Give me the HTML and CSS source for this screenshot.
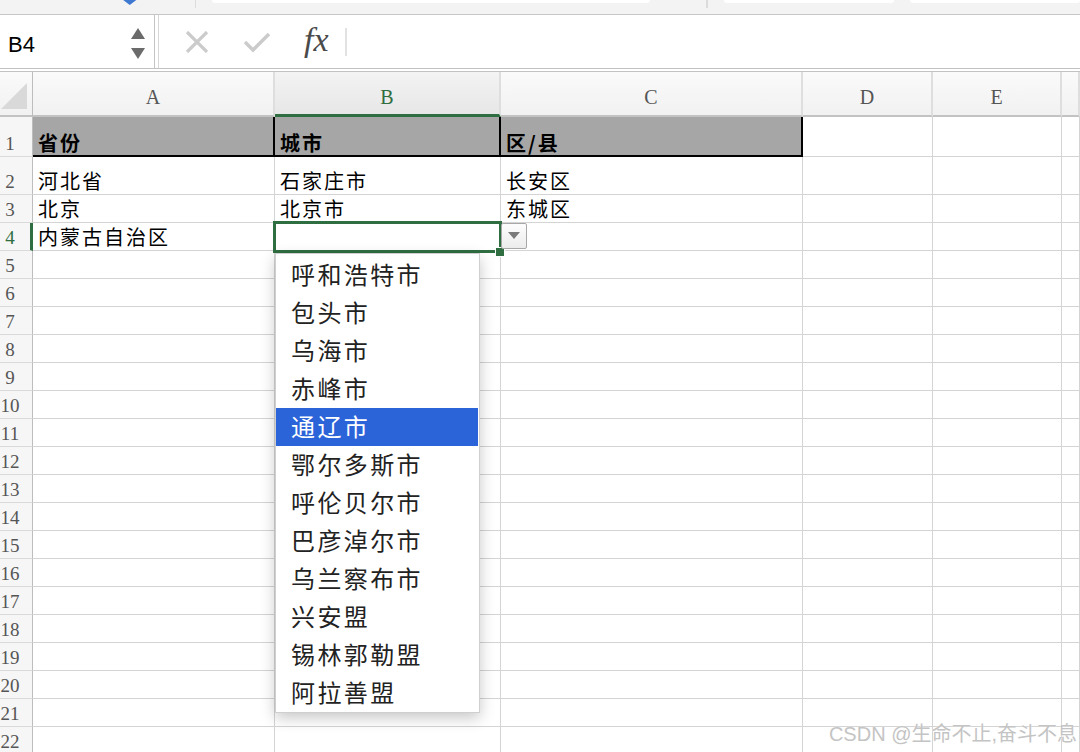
FILE: index.html
```html
<!DOCTYPE html>
<html lang="zh-CN">
<head>
    <meta charset="UTF-8">
    <title>工作簿1</title>
    <link rel="stylesheet" href="styles.css">
</head>
<body>
    <div class="topbar">
        <svg class="topbar-icon" width="18" height="8" viewBox="0 0 18 8"><polygon points="1,0 17,0 9,6" fill="#3f78d0"/></svg>
        <span class="topbar-sep"></span>
        <span class="topbar-box wide"></span>
        <span class="topbar-sep"></span>
        <span class="topbar-box"></span>
        <span class="topbar-box"></span>
    </div>

    <div class="fbar">
        <div class="namebox">
            <span class="cellref">B4</span>
            <svg class="spin" width="16" height="34" viewBox="0 0 16 34">
                <polygon points="8,1 15,12 1,12" fill="#6b6b6b"/>
                <polygon points="1,21 15,21 8,32" fill="#6b6b6b"/>
            </svg>
        </div>
        <div class="fx-area">
            <svg width="24" height="22" viewBox="0 0 24 22"><path d="M2 1 L22 21 M22 1 L2 21" stroke="#cbcbcb" stroke-width="3.2" fill="none"/></svg>
            <svg width="28" height="22" viewBox="0 0 28 22"><path d="M2 11 L10 19 L26 3" stroke="#cbcbcb" stroke-width="3.4" fill="none"/></svg>
            <span class="fx">fx</span>
            <span class="fx-sep"></span>
        </div>
    </div>

    <div class="sheet">
        <div class="row head">
            <div class="corner"><svg width="28" height="28" viewBox="0 0 28 28"><polygon points="1,27 27,27 27,1" fill="#d9d9d9"/></svg></div>
            <div class="ch">A</div>
            <div class="ch sel">B</div>
            <div class="ch">C</div>
            <div class="ch">D</div>
            <div class="ch">E</div>
            <div class="ch"></div>
        </div>
        <div class="row r1">
            <div class="rh">1</div>
            <div class="cell title">省份</div>
            <div class="cell title">城市</div>
            <div class="cell title">区/县</div>
            <div class="cell"></div><div class="cell"></div><div class="cell"></div>
        </div>
        <div class="row r2">
            <div class="rh">2</div>
            <div class="cell">河北省</div>
            <div class="cell">石家庄市</div>
            <div class="cell">长安区</div>
            <div class="cell"></div><div class="cell"></div><div class="cell"></div>
        </div>
        <div class="row">
            <div class="rh">3</div>
            <div class="cell">北京</div>
            <div class="cell">北京市</div>
            <div class="cell">东城区</div>
            <div class="cell"></div><div class="cell"></div><div class="cell"></div>
        </div>
        <div class="row">
            <div class="rh active">4</div>
            <div class="cell">内蒙古自治区</div>
            <div class="cell"></div>
            <div class="cell"></div>
            <div class="cell"></div><div class="cell"></div><div class="cell"></div>
        </div>
        <div class="row"><div class="rh">5</div><div class="cell"></div><div class="cell"></div><div class="cell"></div><div class="cell"></div><div class="cell"></div><div class="cell"></div></div>
        <div class="row"><div class="rh">6</div><div class="cell"></div><div class="cell"></div><div class="cell"></div><div class="cell"></div><div class="cell"></div><div class="cell"></div></div>
        <div class="row"><div class="rh">7</div><div class="cell"></div><div class="cell"></div><div class="cell"></div><div class="cell"></div><div class="cell"></div><div class="cell"></div></div>
        <div class="row"><div class="rh">8</div><div class="cell"></div><div class="cell"></div><div class="cell"></div><div class="cell"></div><div class="cell"></div><div class="cell"></div></div>
        <div class="row"><div class="rh">9</div><div class="cell"></div><div class="cell"></div><div class="cell"></div><div class="cell"></div><div class="cell"></div><div class="cell"></div></div>
        <div class="row"><div class="rh">10</div><div class="cell"></div><div class="cell"></div><div class="cell"></div><div class="cell"></div><div class="cell"></div><div class="cell"></div></div>
        <div class="row"><div class="rh">11</div><div class="cell"></div><div class="cell"></div><div class="cell"></div><div class="cell"></div><div class="cell"></div><div class="cell"></div></div>
        <div class="row"><div class="rh">12</div><div class="cell"></div><div class="cell"></div><div class="cell"></div><div class="cell"></div><div class="cell"></div><div class="cell"></div></div>
        <div class="row"><div class="rh">13</div><div class="cell"></div><div class="cell"></div><div class="cell"></div><div class="cell"></div><div class="cell"></div><div class="cell"></div></div>
        <div class="row"><div class="rh">14</div><div class="cell"></div><div class="cell"></div><div class="cell"></div><div class="cell"></div><div class="cell"></div><div class="cell"></div></div>
        <div class="row"><div class="rh">15</div><div class="cell"></div><div class="cell"></div><div class="cell"></div><div class="cell"></div><div class="cell"></div><div class="cell"></div></div>
        <div class="row"><div class="rh">16</div><div class="cell"></div><div class="cell"></div><div class="cell"></div><div class="cell"></div><div class="cell"></div><div class="cell"></div></div>
        <div class="row"><div class="rh">17</div><div class="cell"></div><div class="cell"></div><div class="cell"></div><div class="cell"></div><div class="cell"></div><div class="cell"></div></div>
        <div class="row"><div class="rh">18</div><div class="cell"></div><div class="cell"></div><div class="cell"></div><div class="cell"></div><div class="cell"></div><div class="cell"></div></div>
        <div class="row"><div class="rh">19</div><div class="cell"></div><div class="cell"></div><div class="cell"></div><div class="cell"></div><div class="cell"></div><div class="cell"></div></div>
        <div class="row"><div class="rh">20</div><div class="cell"></div><div class="cell"></div><div class="cell"></div><div class="cell"></div><div class="cell"></div><div class="cell"></div></div>
        <div class="row"><div class="rh">21</div><div class="cell"></div><div class="cell"></div><div class="cell"></div><div class="cell"></div><div class="cell"></div><div class="cell"></div></div>
        <div class="row"><div class="rh">22</div><div class="cell"></div><div class="cell"></div><div class="cell"></div><div class="cell"></div><div class="cell"></div><div class="cell"></div></div>

        <!-- selected cell B4 with validation list -->
        <div class="selection"></div>
        <div class="fill-handle"></div>
        <div class="dd-btn"><svg width="12" height="8" viewBox="0 0 12 8"><polygon points="0,0 12,0 6,7" fill="#7a7a7a"/></svg></div>
        <ul class="dropdown">
            <li>呼和浩特市</li>
            <li>包头市</li>
            <li>乌海市</li>
            <li>赤峰市</li>
            <li class="hl">通辽市</li>
            <li>鄂尔多斯市</li>
            <li>呼伦贝尔市</li>
            <li>巴彦淖尔市</li>
            <li>乌兰察布市</li>
            <li>兴安盟</li>
            <li>锡林郭勒盟</li>
            <li>阿拉善盟</li>
        </ul>
    </div>

    <div class="watermark">CSDN @生命不止,奋斗不息</div>
</body>
</html>
```

FILE: styles.css
```css
body {
    margin: 0;
    width: 1080px;
    height: 752px;
    overflow: hidden;
    background-color: #fff;
    font-family: "Noto Sans CJK SC", sans-serif;
    color: #000;
    position: relative;
}

/* ribbon remains at the very top */
.topbar {
    height: 14px;
    background-color: #f3f3f3;
    border-bottom: 1px solid #c6c6c6;
    display: flex;
    align-items: flex-start;
    overflow: hidden;
}
.topbar-icon {
    margin-left: 121px;
    margin-top: -1px;
}
.topbar-sep {
    width: 2px;
    height: 8px;
    background-color: #dcdcdc;
    margin-left: 56px;
}
.topbar-box {
    height: 3px;
    width: 175px;
    background-color: #fff;
    margin-left: 16px;
    border-radius: 0 0 3px 3px;
}
.topbar-box.wide {
    width: 450px;
}

/* formula bar */
.fbar {
    height: 53px;
    display: flex;
    border-bottom: 4px double #c2c2c2;
}
.namebox {
    width: 155px;
    border-right: 1px solid #c4c4c4;
    display: flex;
    align-items: center;
    justify-content: space-between;
    padding: 0 8px 0 8px;
    box-sizing: border-box;
}
.cellref {
    font-family: "Liberation Sans", Arial, sans-serif;
    font-size: 22px;
    margin-top: 7px;
}
.spin {
    margin-top: 4px;
}
.fx-area {
    flex: 1;
    margin-left: 3px;
    border-left: 1px solid #d8d8d8;
    display: flex;
    align-items: center;
    padding-left: 26px;
    gap: 34px;
}
.fx {
    font-family: "Liberation Serif", "DejaVu Serif", serif;
    font-style: italic;
    font-size: 34px;
    color: #4a4a4a;
    margin-left: -1px;
    margin-top: -4px;
}
.fx-sep {
    width: 2px;
    height: 28px;
    background-color: #e2e2e2;
    margin-left: -18px;
}

/* sheet grid */
.sheet {
    position: relative;
}
.row {
    display: grid;
    grid-template-columns: 33px 242px 226px 302px 130px 129px 1fr;
    height: 28px;
}
.row > div {
    box-sizing: border-box;
    border-right: 1px solid #d4d4d4;
    border-bottom: 1px solid #d4d4d4;
}
.row.head {
    height: 45px;
    background: linear-gradient(#fafafa, #f1f1f1);
}
.row.head > div {
    border-bottom: 2px solid #c3c3c3;
    border-right: 2px solid #dedede;
}
.row.head > .corner {
    border-right: 1px solid #bdbdbd;
    display: flex;
    align-items: flex-end;
    padding: 0 0 5px 0;
}
.ch {
    font-family: "Liberation Serif", "DejaVu Serif", serif;
    font-size: 20px;
    color: #555;
    display: flex;
    align-items: center;
    justify-content: center;
    padding-top: 8px;
}
.row.head > .ch.sel {
    color: #2f6e40;
    background: linear-gradient(#f3f3f3, #e7e7e7);
    border-bottom: 3px solid #2f6e40;
}
.rh {
    font-family: "Liberation Serif", "DejaVu Serif", serif;
    font-size: 19px;
    color: #555;
    background-color: #f6f6f6;
    display: flex;
    align-items: flex-end;
    justify-content: center;
    padding: 0 12px 1px 0;
}
.row > .rh {
    border-right: 1px solid #bdbdbd;
    border-bottom: 1px solid #dadada;
}
.row > .rh.active {
    color: #2f6e40;
    border-right: 3px solid #2f6e40;
    padding-right: 10px;
}
.cell {
    font-size: 20px;
    letter-spacing: 2px;
    line-height: 26px;
    padding-left: 5px;
    display: flex;
    align-items: flex-end;
    white-space: nowrap;
}

.row.r1 {
    height: 40px;
}
.row.r1 > .title {
    background-color: #a6a6a6;
    font-weight: bold;
    border-right: 2px solid #000;
    border-bottom: 2px solid #000;
    line-height: 24px;
}
.row.r2 {
    height: 38px;
}

/* selection + data validation list */
.selection {
    position: absolute;
    left: 273px;
    top: 149px;
    width: 229px;
    height: 32px;
    box-sizing: border-box;
    border: 3px solid #2f6e40;
}
.fill-handle {
    position: absolute;
    left: 495px;
    top: 175px;
    width: 8px;
    height: 8px;
    background-color: #2f6e40;
    border: 1px solid #fff;
}
.dd-btn {
    position: absolute;
    left: 501px;
    top: 151px;
    width: 26px;
    height: 26px;
    box-sizing: border-box;
    border: 1px solid #a8a8a8;
    border-radius: 2px;
    background: linear-gradient(#fdfdfd, #ececec);
    display: flex;
    align-items: center;
    justify-content: center;
}
.dropdown {
    position: absolute;
    left: 275px;
    top: 181px;
    width: 205px;
    margin: 0;
    padding: 2px 0 0 0;
    list-style: none;
    box-sizing: border-box;
    background-color: #fff;
    border: 1px solid #cfcfcf;
    box-shadow: 0 5px 14px rgba(0, 0, 0, 0.22);
}
.dropdown li {
    height: 38px;
    line-height: 35px;
    padding-left: 15px;
    font-size: 24px;
    letter-spacing: 2.4px;
    color: #222;
    margin-right: 1px;
}
.dropdown li.hl {
    background-color: #2b63d9;
    color: #fff;
}

.watermark {
    position: absolute;
    right: 3px;
    bottom: 5px;
    font-family: "Liberation Sans", "Noto Sans CJK SC", sans-serif;
    font-size: 20px;
    color: #c4c4c4;
    text-shadow: 0 0 1px #fff;
}
```
